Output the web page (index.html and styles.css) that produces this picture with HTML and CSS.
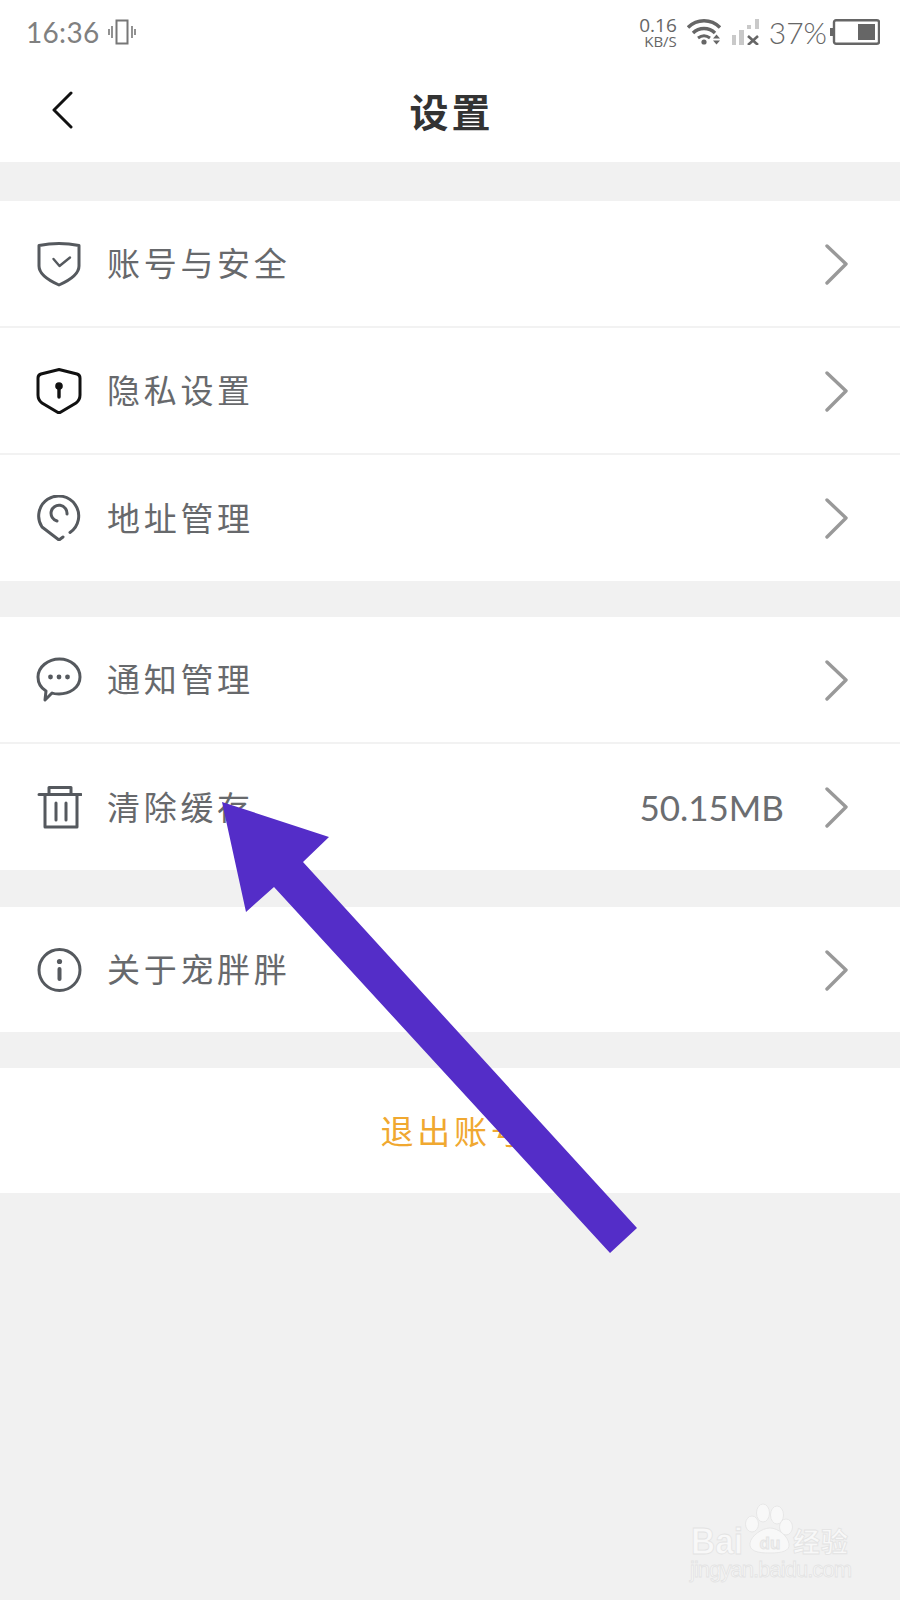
FILE: index.html
```html
<!DOCTYPE html>
<html lang="zh-CN">
<head>
<meta charset="utf-8">
<title>设置</title>
<link rel="stylesheet" href="styles.css">
</head>
<body>
<div class="screen">
  <header class="top">
    <div class="status">
      <div class="status-left">
        <span class="clock">16:36</span>
        <svg class="vib" viewBox="0 0 28 26"><rect x="8.5" y="1.5" width="11" height="23" fill="none" stroke="#777" stroke-width="2"/><path d="M4 7V19M1 10V16M24 7V19M27 10V16" stroke="#777" stroke-width="1.6" fill="none"/></svg>
      </div>
      <div class="status-right">
        <div class="speed"><span class="speed-n">0.16</span><span class="speed-u">KB/S</span></div>
        <svg class="wifi" viewBox="0 0 36 26"><path d="M1 8.5C10 -0.5 24 -0.5 33 8.5" fill="none" stroke="#666" stroke-width="3.4"/><path d="M6 14C12 8 22 8 28 14" fill="none" stroke="#666" stroke-width="3.4"/><path d="M11 19C15 16 19 16 23 19" fill="none" stroke="#666" stroke-width="3"/><circle cx="17" cy="23" r="2.6" fill="#666"/><path d="M29.5 15.5L33 19.5H26ZM29.5 25.5L26 21.5H33Z" fill="#666"/></svg>
        <svg class="signal" viewBox="0 0 28 26"><path d="M1 16h4v10H1zM8 11h5v15H8zM16 6h4v4h-4zM24 0h4v10h-4z" fill="#c9c9c9"/><path d="M17 17L27 26M27 17L17 26" stroke="#666" stroke-width="2.6"/></svg>
        <span class="pct">37%</span>
        <svg class="battery" viewBox="0 0 50 26"><rect x="0" y="9" width="3" height="8" fill="#666"/><rect x="4" y="1.2" width="45" height="23.6" rx="2" fill="#fff" stroke="#666" stroke-width="2.4"/><rect x="28" y="5" width="17" height="16" fill="#666"/></svg>
      </div>
    </div>
    <nav class="nav">
      <div class="nav-side"><svg class="back" viewBox="0 0 22 38"><path d="M20 2L3 19L20 36" fill="none" stroke="#111" stroke-width="3" stroke-linecap="round" stroke-linejoin="round"/></svg></div>
      <h1 class="title">设置</h1>
      <div class="nav-side"></div>
    </nav>
  </header>

  <section class="group first">
    <div class="row">
      <svg class="ico" viewBox="0 0 46 46"><path d="M3 4.5Q23 0.5 43 4.5V25C43 34 32 40 23 44C14 40 3 34 3 25Z" class="ln"/><path d="M17.5 18L23.5 25L34 16.5" class="ln thin"/></svg>
      <span class="label">账号与安全</span>
      <svg class="chev" viewBox="0 0 24 42"><use href="#chevron"/></svg>
    </div>
    <div class="row">
      <svg class="ico" viewBox="0 0 46 46"><path d="M23 1.5L41 6Q44 7 44 10V27Q44 32 40 35L24 44.5H22L6 35Q2 32 2 27V10Q2 7 5 6Z" fill="none" stroke="#111" stroke-width="3"/><circle cx="23" cy="18" r="3.8" fill="#111"/><path d="M23 18V29" stroke="#111" stroke-width="3.4" stroke-linecap="round"/></svg>
      <span class="label">隐私设置</span>
      <svg class="chev" viewBox="0 0 24 42"><use href="#chevron"/></svg>
    </div>
    <div class="row">
      <svg class="ico" viewBox="0 0 46 46"><path d="M34 37.5A20 20 0 1 0 6 32L23 45L27 42" class="ln"/><path d="M21 26A8 8 0 1 1 31 19" class="ln"/></svg>
      <span class="label">地址管理</span>
      <svg class="chev" viewBox="0 0 24 42"><use href="#chevron"/></svg>
    </div>
  </section>

  <section class="group">
    <div class="row">
      <svg class="ico" viewBox="0 0 46 46"><path d="M23.5 2C35 2 44 10 44 20C44 31 33 37 23 37C20 37 18 37 16 36L9 43L10 34C5 31 2 26 2 20C2 10 12 2 23.5 2Z" class="ln"/><circle cx="14.5" cy="20" r="2.4" class="dot"/><circle cx="23" cy="20" r="2.4" class="dot"/><circle cx="31.5" cy="20" r="2.4" class="dot"/></svg>
      <span class="label">通知管理</span>
      <svg class="chev" viewBox="0 0 24 42"><use href="#chevron"/></svg>
    </div>
    <div class="row">
      <svg class="ico" viewBox="0 0 46 46"><path d="M3 10.5H45M13 10.5V3.5H35V10.5M9 10.5V43H41V10.5M20 19V36M30 19V36" class="ln"/></svg>
      <span class="label">清除缓存</span>
      <span class="value">50.15MB</span>
      <svg class="chev" viewBox="0 0 24 42"><use href="#chevron"/></svg>
    </div>
  </section>

  <section class="group wide-gap">
    <div class="row">
      <svg class="ico" viewBox="0 0 46 46"><circle cx="23.5" cy="23" r="20.5" class="ln"/><circle cx="23.5" cy="14.5" r="2.6" class="dot"/><path d="M23.5 22V32" stroke="#55595e" stroke-width="4" stroke-linecap="round"/></svg>
      <span class="label">关于宠胖胖</span>
      <svg class="chev" viewBox="0 0 24 42"><use href="#chevron"/></svg>
    </div>
  </section>

  <section class="group">
    <div class="row logout">退出账号</div>
  </section>

  <svg class="defs" width="0" height="0"><defs><path id="chevron" d="M3 3L22 21L3 40" fill="none" stroke="#999" stroke-width="3.4" stroke-linecap="round" stroke-linejoin="round"/></defs></svg>

  <svg class="arrow" viewBox="0 0 900 1600"><polygon points="222,802 329,837 303,862 637,1228 610,1253 274,887 246,912" fill="#542dc8"/></svg>

  <svg class="mark" viewBox="0 0 240 120">
    <g class="mark-g">
      <text x="31" y="74" class="mark-bai" textLength="52" lengthAdjust="spacingAndGlyphs">Bai</text>
      <ellipse cx="103" cy="33" rx="6.5" ry="9"/>
      <ellipse cx="117" cy="35" rx="6.5" ry="9"/>
      <ellipse cx="92" cy="44" rx="6.5" ry="8"/>
      <ellipse cx="126" cy="47" rx="6.5" ry="8"/>
      <path d="M110 48C118 48 128 56 129 64C130 71 122 73 110 73C97 73 89 71 90 63C91 56 102 48 110 48Z"/>
      <text x="110" y="69" class="mark-du" text-anchor="middle">du</text>
      <text x="133" y="72" class="mark-cn" textLength="55">经验</text>
      <text x="30" y="97" class="mark-url" textLength="162">jingyan.baidu.com</text>
    </g>
  </svg>
</div>
</body>
</html>
```

FILE: styles.css
```css
* { box-sizing: border-box; }
html, body { margin: 0; padding: 0; }
body { background: #f1f1f1; }
.screen {
  position: relative;
  width: 900px;
  height: 1600px;
  overflow: hidden;
  background: #f1f1f1;
  font-family: "Noto Sans CJK SC", "Noto Sans", sans-serif;
}
.top { background: #fff; height: 162px; }
.status {
  height: 64px;
  display: flex;
  justify-content: space-between;
  align-items: center;
  padding: 0 20px 0 26px;
  color: #777;
}
.status-left, .status-right { display: flex; align-items: center; }
.clock { font-family: Lato, sans-serif; font-weight: 400; font-size: 28px; letter-spacing: 0.3px; line-height: 1; color: #808080; }
.vib { width: 28px; height: 26px; margin-left: 9px; }
.speed { display: flex; flex-direction: column; align-items: flex-end; font-family: "Open Sans", sans-serif; color: #666; width: 40px; }
.speed-n { font-size: 19px; line-height: 18px; }
.speed-u { font-size: 15px; line-height: 14px; }
.wifi { width: 36px; height: 26px; margin-left: 10px; }
.signal { width: 28px; height: 26px; margin-left: 8px; }
.pct { font-family: Lato, sans-serif; font-weight: 300; font-size: 30px; line-height: 1; margin-left: 10px; color: #666; }
.battery { width: 50px; height: 26px; margin-left: 3px; }
.nav {
  height: 98px;
  display: grid;
  grid-template-columns: 1fr auto 1fr;
  align-items: center;
  padding-bottom: 6px;
}
.nav-side { display: flex; align-items: center; padding-left: 51px; }
.back { width: 22px; height: 38px; }
.title { margin: 0 0 0 3px; font-size: 39px; font-weight: 700; color: #333; line-height: 1; letter-spacing: 3px; }
.group { background: #fff; margin-top: 36px; }
.group.first { margin-top: 39px; }
.group.wide-gap { margin-top: 37px; }
.row {
  height: 127px;
  border-bottom: 2px solid #f2f2f2;
  display: flex;
  align-items: center;
  padding: 0 52px 0 36px;
}
.row:last-child { border-bottom: 0; height: 126px; }
.row:only-child { height: 125px; }
.ico { width: 46px; height: 46px; flex: none; }
.ln { fill: none; stroke: #55595e; stroke-width: 3; stroke-linecap: round; stroke-linejoin: round; }
.ln.thin { stroke-width: 2.4; }
.dot { fill: #55595e; }
.label { margin-left: 25px; padding-bottom: 2px; font-size: 33px; letter-spacing: 3.7px; color: #67696c; line-height: 1; flex: 1; }
.value { font-family: Lato, sans-serif; font-size: 35px; color: #6b6d70; line-height: 1; margin-right: 40px; }
.chev { width: 24px; height: 42px; flex: none; }
.logout { justify-content: center; padding: 0 0 2px 8px; font-size: 33px; letter-spacing: 3.7px; color: #f0a830; }
.defs { position: absolute; }
.arrow { position: absolute; left: 0; top: 0; width: 900px; height: 1600px; }
.mark { position: absolute; left: 660px; top: 1480px; width: 240px; height: 120px; }
.mark-g * { fill: #f8f8f8; stroke: #e3e3e3; stroke-width: 0.8; }
.mark-bai { font-family: "Liberation Sans", sans-serif; font-weight: 700; font-size: 37px; }
.mark-du { font-family: "Liberation Sans", sans-serif; font-weight: 700; font-size: 17px; fill: #f0f0f0; }
.mark-cn { font-family: "Noto Sans CJK SC", sans-serif; font-weight: 700; font-size: 27px; }
.mark-url { font-family: "Liberation Sans", sans-serif; font-size: 22px; }
```
